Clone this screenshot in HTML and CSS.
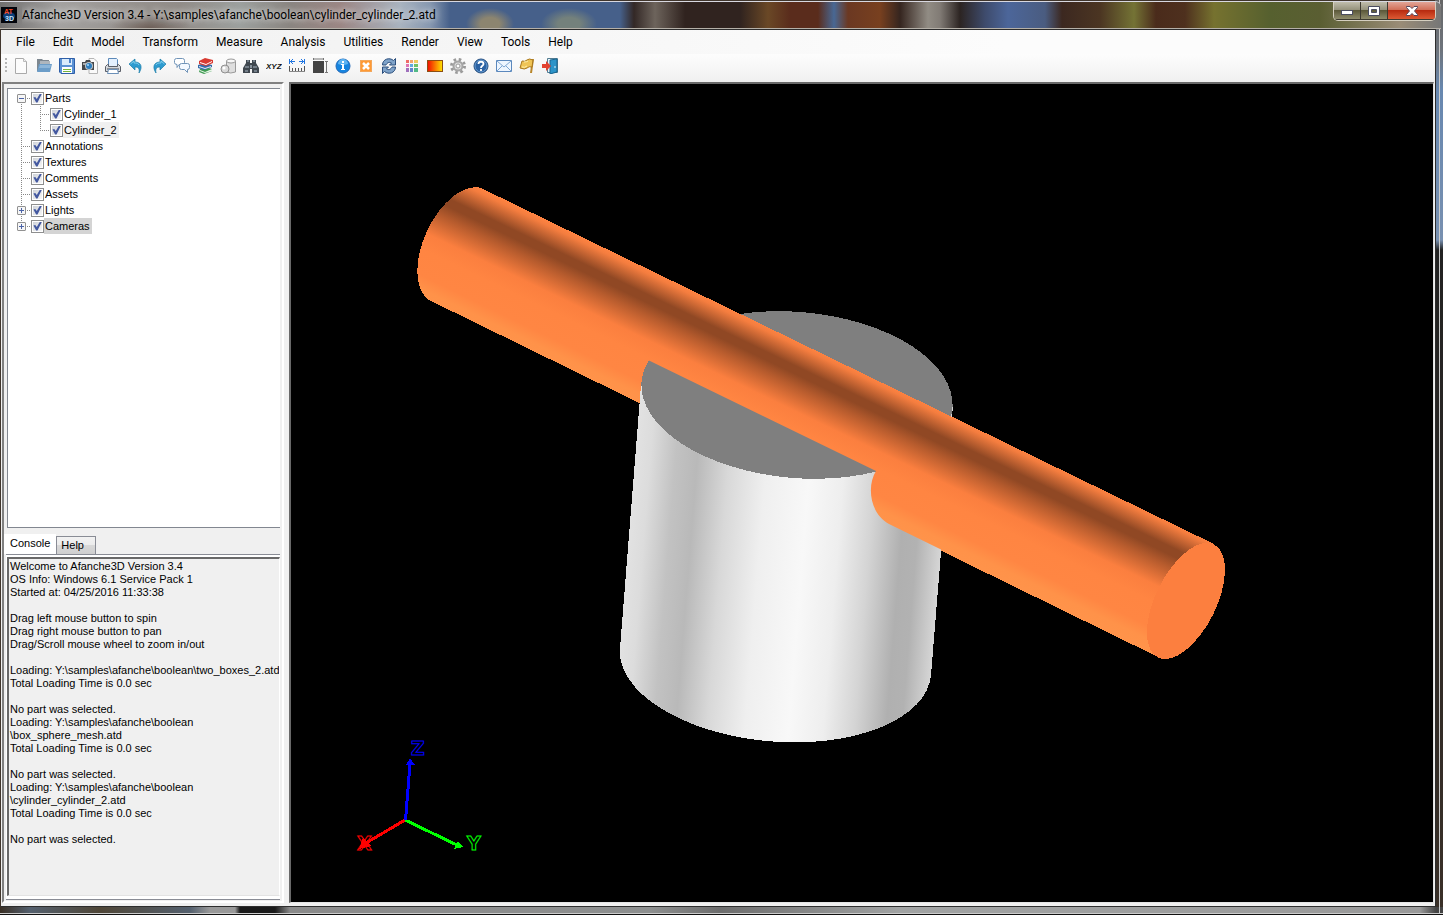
FILE: index.html
```html
<!DOCTYPE html>
<html lang="en">
<head>
<meta charset="utf-8">
<title>Afanche3D Version 3.4</title>
<link rel="stylesheet" href="styles.css">
</head>
<body>
<div class="window">
  <header class="titlebar">
    <svg class="app-icon" viewBox="0 0 16 16" aria-hidden="true">
      <rect width="16" height="16" fill="#02050c"/>
      <ellipse cx="8" cy="9" rx="6" ry="4" fill="#0d3f78"/>
      <text class="logo-top" x="3" y="7">AT</text>
      <text class="logo-bottom" x="4" y="14">3D</text>
    </svg>
    <h1 class="title">Afanche3D Version 3.4 - Y:\samples\afanche\boolean\cylinder_cylinder_2.atd</h1>
    <div class="caption-buttons">
      <button class="caption" type="button" aria-label="Minimize">
        <svg width="14" height="12" viewBox="0 0 14 12"><rect x="1.5" y="5.500" width="11" height="4" fill="#fff" stroke="#4b4d60"/></svg>
      </button>
      <button class="caption" type="button" aria-label="Maximize">
        <svg width="12" height="12" viewBox="0 0 12 12"><path d="M.5 1.500h11v9H.5zM3.500 4.500h5v3h-5z" fill="#fff" fill-rule="evenodd" stroke="#4b4d60"/></svg>
      </button>
      <button class="caption close" type="button" aria-label="Close">
        <svg width="12" height="12" viewBox="0 0 12 12"><path d="M.5 1.500h3.500L6 3.500l2-2h3.500v1L8.500 6l3 3.500v1H8L6 8.500l-2 2H.5v-1L3.500 6l-3-3.500z" fill="#fff" stroke="#54465a"/></svg>
      </button>
    </div>
  </header>

  <div class="client">
    <nav class="menubar" aria-label="Main menu">
      <button type="button">File</button><button type="button">Edit</button><button type="button">Model</button><button type="button">Transform</button><button type="button">Measure</button><button type="button">Analysis</button><button type="button">Utilities</button><button type="button">Render</button><button type="button">View</button><button type="button">Tools</button><button type="button">Help</button>
    </nav>

    <div class="toolbar" role="toolbar" aria-label="Tools">
      <span class="grip"></span>
      <button type="button" aria-label="New"><svg viewBox="0 0 16 16"><path d="M2.500.5h8l3 3v12h-11z" fill="#fcfcfc" stroke="#aaa"/><path d="M10.500.5v3h3" fill="#eee" stroke="#bbb"/></svg></button>
      <button type="button" aria-label="Open"><svg viewBox="0 0 16 16"><path d="M1 1h5l1 1h6v11H1z" fill="#7d8790"/><path d="M4 3h10v4H4z" fill="#aeb6bd"/><path d="M3 6h13l-2 8H1z" fill="#6c9dc8"/><path d="M4 7h11l-1 3H3z" fill="#8db6d9"/></svg></button>
      <button type="button" aria-label="Save"><svg viewBox="0 0 16 16"><path d="M.5.5h15v15H2l-1.500-1.500z" fill="#5b92d4" stroke="#2e5fa8"/><path d="M3 1h10v6H3z" fill="#d9ebfb"/><path d="M10 1h2v4h-2z" fill="#4a80c8"/><path d="M3 9h10v6H3z" fill="#fff"/><path d="M4 11h8v1H4zM4 13h8v1H4z" fill="#76b43c"/></svg></button>
      <button type="button" aria-label="Snapshot"><svg viewBox="0 0 16 16"><path d="M7 .5h5l3.500 3.500v11.500H7z" fill="#fafafa" stroke="#b5b5b5"/><path d="M0 4h3l1-2h4l1 2h3v8H0z" fill="#45484b"/><path d="M1 5h3v2H1z" fill="#a7a9ab"/><circle cx="7" cy="8" r="4" fill="#c1c6c9"/><circle cx="7" cy="8" r="3" fill="#2e7ec0"/><circle cx="6" cy="7" r="1" fill="#a5dcff"/></svg></button>
      <button type="button" aria-label="Print"><svg viewBox="0 0 16 16"><path d="M3.500.5h8l1 1v7h-9z" fill="#e4f0fd" stroke="#5c89b9"/><path d="M.5 8.500l2-2h1v2h9v-2h1l2 2v5H.5z" fill="#d5d8dc" stroke="#5a5f68"/><path d="M2 10h12v2H2z" fill="#8b9098"/><path d="M3.500 11.500h9l1 4h-11z" fill="#fff" stroke="#6b90b8"/></svg></button>
      <button type="button" aria-label="Undo"><svg viewBox="0 0 16 16"><path d="M1 6l6-5v3c6 0 8 5 4 11 1-5-1-6-4-6v3z" fill="#2e9bd0" stroke="#187ba8" stroke-width=".7"/><path d="M2.500 6L6 3v2c3 0 4 0 5 2" fill="none" stroke="#81cdec"/></svg></button>
      <button type="button" aria-label="Redo"><svg viewBox="0 0 16 16"><path d="M15 6L9 1v3C3 4 1 9 5 15c-1-5 1-6 4-6v3z" fill="#2e9bd0" stroke="#187ba8" stroke-width=".7"/><path d="M13.500 6L10 3v2C7 5 6 5 5 7" fill="none" stroke="#81cdec"/></svg></button>
      <button type="button" aria-label="Comments"><svg viewBox="0 0 16 16"><path d="M2.500.5h6q2 0 2 2v2q0 2-2 2H5l-2 3V6.500Q.5 6.500.5 4.500v-2q0-2 2-2z" fill="#fff" stroke="#7194b8"/><path d="M7.500 5.500h6q2 0 2 2v2q0 2-2 2v3l-3-3h-3q-2 0-2-2v-2q0-2 2-2z" fill="#f4f9ff" stroke="#7194b8"/></svg></button>
      <button type="button" aria-label="Library"><svg viewBox="0 0 16 16"><path d="M3 11l6-2 6 2v2l-8 3-5-2z" fill="#3f9c52"/><path d="M3 12l5 2 7-3v2l-7 2-5-2z" fill="#e9f5e9"/><path d="M1 7l7-2 7 2v2l-8 3-6-2z" fill="#366ba8"/><path d="M2 8l6 2 6-2v1l-6 2-6-2z" fill="#e5effa"/><path d="M2 3l6-3 8 2v3L9 8 2 6z" fill="#d83b32"/><path d="M3 4l6 2 6-3v1L9 7 3 5z" fill="#fff"/></svg></button>
      <button type="button" aria-label="Shapes"><svg viewBox="0 0 16 16"><path d="M6.500 3v11q4 2 9 0V3z" fill="#dedede" stroke="#999"/><ellipse cx="11" cy="3" rx="4.500" ry="2" fill="#f7f7f7" stroke="#999"/><path d="M3 7h3l2 7H2z" fill="#bbb"/><circle cx="5" cy="11" r="4" fill="#d9d9d9" stroke="#8f8f8f"/><circle cx="4" cy="10" r="1.500" fill="#fff"/></svg></button>
      <button type="button" aria-label="Find"><svg viewBox="0 0 16 16"><path d="M3 2h4v3h2V2h4v3l3 5v5H9v-4H7v4H0v-5l3-5z" fill="#3f474f"/><path d="M4 3h2M10 3h2M2 9h4M10 9h4M2 13h3M11 13h3" stroke="#a9b7c4"/><path d="M7 7h2v3H7z" fill="#89939d"/></svg></button>
      <button type="button" aria-label="Coordinates"><svg viewBox="0 0 16 16"><text class="xyz" x="0" y="11">XYZ</text></svg></button>
      <button type="button" aria-label="Ruler"><svg viewBox="0 0 16 16"><path d="M.5 1v5M15.500 1v5" stroke="#2276e0"/><path d="M1 3.500h5M10 3.500h5M4 1L1.500 3.500 4 6M12 1l2.500 2.500L12 6" fill="none" stroke="#2276e0"/><path d="M.5 8v5M3.500 10v3M6.500 10v3M9.500 10v3M12.500 10v3M15.500 8v5" stroke="#555"/><path d="M0 13.500h16" stroke="#888"/></svg></button>
      <button type="button" aria-label="Bounding box"><svg viewBox="0 0 16 16"><path d="M1 3h11v12H1z" fill="#444"/><path d="M1 1h11M14.500 3v12M13 3.500h3M13 14.500h3M1.500 0v2M11.500 0v2" stroke="#777"/></svg></button>
      <button type="button" aria-label="Information"><svg viewBox="0 0 16 16"><circle cx="8" cy="8" r="7" fill="#1684df" stroke="#2269b8"/><path d="M3 6a5 5 0 0 1 10 0q-5 2-10 0" fill="#5fb4f2"/><path d="M7 3h2v2H7zM6 6h3v5h1v1H6v-1h1V7H6z" fill="#fff"/></svg></button>
      <button type="button" aria-label="Clear"><svg viewBox="0 0 16 16"><rect x="2.500" y="2.500" width="11" height="11" fill="#ff9a35" stroke="#f3a75b"/><path d="M5 5l6 6M11 5l-6 6" stroke="#fff" stroke-width="2.500"/></svg></button>
      <button type="button" aria-label="Refresh"><svg viewBox="0 0 16 16"><path d="M1.500 7c0-6 7-8 11-4.500L14.500.5v6.500h-6L10.500 5C8 3.500 6 5 5 7z" fill="#7fa3c9" stroke="#2b4e7c"/><path d="M14.500 9c0 6-7 8-11 4.500L1.500 15.500V9h6l-2 2c2.500 1.500 4.500 0 5.500-2z" fill="#7fa3c9" stroke="#2b4e7c"/></svg></button>
      <button type="button" aria-label="Color grid"><svg viewBox="0 0 16 16"><path d="M2 2h3v3H2z" fill="#ef6c67"/><path d="M6 2h3v3H6z" fill="#f4a46c"/><path d="M10 2h4v3h-4z" fill="#f2ca60"/><path d="M2 6h3v3H2z" fill="#e073b4"/><path d="M6 6h3v3H6z" fill="#61a9e2"/><path d="M10 6h4v3h-4z" fill="#72c366"/><path d="M2 10h3v4H2z" fill="#a071bd"/><path d="M6 10h3v4H6z" fill="#6384cb"/><path d="M10 10h4v4h-4z" fill="#51b987"/></svg></button>
      <button type="button" aria-label="Gradient"><svg viewBox="0 0 16 16"><defs><linearGradient id="heat"><stop stop-color="#f20b00"/><stop offset="1" stop-color="#ffe400"/></linearGradient></defs><rect x=".5" y="2.500" width="15" height="11" fill="url(#heat)" stroke="#8c4e12"/></svg></button>
      <button type="button" aria-label="Settings"><svg viewBox="0 0 16 16"><circle cx="8" cy="8" r="6.500" fill="none" stroke="#9a9a9a" stroke-width="3" stroke-dasharray="2.500 2.600"/><circle cx="8" cy="8" r="4.500" fill="#ddd" stroke="#a5a5a5" stroke-width="2"/><circle cx="8" cy="8" r="2" fill="#fff" stroke="#999"/></svg></button>
      <button type="button" aria-label="Help"><svg viewBox="0 0 16 16"><circle cx="8" cy="8" r="7" fill="#2b62a3" stroke="#234b7b"/><circle cx="8" cy="8" r="6" fill="none" stroke="#679bd0"/><path d="M5.500 6c0-3 5-3 5 0 0 2-2.500 1.500-2.500 4M8 11v2" fill="none" stroke="#fff" stroke-width="1.800"/></svg></button>
      <button type="button" aria-label="Mail"><svg viewBox="0 0 16 16"><path d="M.5 2.500h15v11H.5z" fill="#eef6ff" stroke="#5b88bd"/><path d="M1 3l7 6 7-6M1 13l5-5M15 13l-5-5" fill="none" stroke="#7da6d2"/></svg></button>
      <button type="button" aria-label="Flag"><svg viewBox="0 0 16 16"><path d="M13 1h2l-2 14h-2z" fill="#b8862a"/><path d="M3 3q3 1 5-1t6 0l-1 7q-3-1-5 1t-7 0z" fill="#efc455" stroke="#a9781d"/><path d="M5 4q3 0 4-1M3 9q3 1 5-1" fill="none" stroke="#fff0ad"/></svg></button>
      <button type="button" aria-label="Exit"><svg viewBox="0 0 16 16"><path d="M5.500.5h10v14h-10z" fill="#e9f3f8" stroke="#537c91"/><path d="M8 2l7-1v13l-7 2z" fill="#2c94c9" stroke="#19658f"/><path d="M13 8v2" stroke="#d9f3ff"/><path d="M0 6h4V3l5 5-5 5v-3H0z" fill="#e24331"/></svg></button>
    </div>

    <main class="workspace">
      <aside class="side">
        <ul class="tree" aria-label="Scene">
          <li class="row"><span class="twig first"><button class="expander" type="button" aria-label="Collapse Parts"></button></span><input type="checkbox" id="t0" checked><label for="t0">Parts</label></li>
          <li class="row"><span class="twig pass"></span><span class="twig"></span><input type="checkbox" id="t1" checked><label for="t1">Cylinder_1</label></li>
          <li class="row"><span class="twig pass"></span><span class="twig last"></span><input type="checkbox" id="t2" checked><label class="hover" for="t2">Cylinder_2</label></li>
          <li class="row"><span class="twig"></span><input type="checkbox" id="t3" checked><label for="t3">Annotations</label></li>
          <li class="row"><span class="twig"></span><input type="checkbox" id="t4" checked><label for="t4">Textures</label></li>
          <li class="row"><span class="twig"></span><input type="checkbox" id="t5" checked><label for="t5">Comments</label></li>
          <li class="row"><span class="twig"></span><input type="checkbox" id="t6" checked><label for="t6">Assets</label></li>
          <li class="row"><span class="twig"><button class="expander plus" type="button" aria-label="Expand Lights"></button></span><input type="checkbox" id="t7" checked><label for="t7">Lights</label></li>
          <li class="row"><span class="twig last"><button class="expander plus" type="button" aria-label="Expand Cameras"></button></span><input type="checkbox" id="t8" checked><label class="selected" for="t8">Cameras</label></li>
        </ul>
        <div class="tabs" role="tablist">
          <button class="tab active" type="button" role="tab" aria-selected="true">Console</button>
          <button class="tab" type="button" role="tab" aria-selected="false">Help</button>
        </div>
        <div class="tab-page">
<pre class="console" role="log">Welcome to Afanche3D Version 3.4
OS Info: Windows 6.1 Service Pack 1
Started at: 04/25/2016 11:33:38

Drag left mouse button to spin
Drag right mouse button to pan
Drag/Scroll mouse wheel to zoom in/out

Loading: Y:\samples\afanche\boolean\two_boxes_2.atd
Total Loading Time is 0.0 sec

No part was selected.
Loading: Y:\samples\afanche\boolean
\box_sphere_mesh.atd
Total Loading Time is 0.0 sec

No part was selected.
Loading: Y:\samples\afanche\boolean
\cylinder_cylinder_2.atd
Total Loading Time is 0.0 sec

No part was selected.</pre>
        </div>
      </aside>

      <section class="viewport" aria-label="3D view">
        <svg class="scene" viewBox="291 84 1142 818">
          <defs>
            <linearGradient id="orange" gradientUnits="userSpaceOnUse" x1="481" y1="188" x2="427" y2="300">
              <stop offset="0" stop-color="#ff8442"/>
              <stop offset=".04" stop-color="#f47d3f"/>
              <stop offset=".19" stop-color="#904824"/>
              <stop offset=".25" stop-color="#904824"/>
              <stop offset=".34" stop-color="#b65b2d"/>
              <stop offset=".52" stop-color="#fb7f3f"/>
              <stop offset=".65" stop-color="#ff8542"/>
              <stop offset=".84" stop-color="#ff8643"/>
              <stop offset=".94" stop-color="#ff9249"/>
              <stop offset="1" stop-color="#ff934a"/>
            </linearGradient>
            <linearGradient id="silver" gradientUnits="userSpaceOnUse" x1="630" y1="515" x2="942" y2="540">
              <stop offset="0" stop-color="#e2e2e2"/>
              <stop offset=".05" stop-color="#dcdcdc"/>
              <stop offset=".13" stop-color="#c2c2c2"/>
              <stop offset=".2" stop-color="#b9b9b9"/>
              <stop offset=".3" stop-color="#d8d8d8"/>
              <stop offset=".42" stop-color="#efefef"/>
              <stop offset=".56" stop-color="#f8f8f8"/>
              <stop offset=".67" stop-color="#eee"/>
              <stop offset=".77" stop-color="#d4d4d4"/>
              <stop offset=".87" stop-color="#b0b0b0"/>
              <stop offset=".92" stop-color="#b2b2b2"/>
              <stop offset="1" stop-color="#d6d6d6"/>
            </linearGradient>
            <clipPath id="front"><path d="M560 317L650 361L876 471C867 485 869 513 889 524L1250 701V100H560z"/></clipPath>
            <path id="rod" d="M481 188L1214 544L1158 657L429 300A34 62 25 0 1 481 188z"/>
          </defs>
          <g shape-rendering="crispEdges">
            <use href="#rod" fill="url(#orange)"/>
            <path d="M641 385L620 648A156 80 5 0 0 931 675L953 405z" fill="url(#silver)"/>
            <ellipse cx="797" cy="395" rx="156" ry="83" transform="rotate(5 797 395)" fill="#7f7f7f"/>
            <g clip-path="url(#front)"><use href="#rod" fill="url(#orange)"/></g>
            <ellipse cx="1186" cy="601" rx="30.300" ry="63" transform="rotate(26.400 1186 601)" fill="#fc7f3f"/>
            <path d="M405 820L366 843" stroke="#f00" stroke-width="3"/>
            <path d="M359 849l4-11 8 8z" fill="#f00"/>
            <path d="M405 820L457 845" stroke="#0f0" stroke-width="3"/>
            <path d="M463 847l-9 2 4-8z" fill="#0f0"/>
            <path d="M405.500 820L410 764" stroke="#00f" stroke-width="3"/>
            <path d="M410 758l5 7h-9z" fill="#00f"/>
          </g>
          <text class="axis axis-x" x="357" y="850">X</text>
          <text class="axis axis-y" x="467" y="850">Y</text>
          <text class="axis axis-z" x="411" y="755">Z</text>
        </svg>
      </section>
    </main>
  </div>
</div>
</body>
</html>
```

FILE: styles.css
```css
* { box-sizing: border-box; }

body {
  margin: 0;
  background: #000;
  font-family: "Liberation Sans", Arial, sans-serif;
  font-size: 11px;
  color: #000;
}

button {
  margin: 0;
  padding: 0;
  border: 0;
  background: none;
  color: inherit;
  font: inherit;
}

svg { display: block; }

.window {
  display: flex;
  flex-direction: column;
  height: 100vh;
  padding: 1px 2px 1px 0;
  background:
    linear-gradient(#111, #111) bottom / 100% 1px no-repeat,
    linear-gradient(#ccc, #ccc) 0 calc(100% - 1px) / 100% 1px no-repeat,
    linear-gradient(#ccc, #ccc) calc(100% - 3px) 0 / 1px 100% no-repeat,
    linear-gradient(90deg, #3a2f24 0, #54606e 30px, #4f4637 100px, #54606e 190px, #999 210px, #999 235px, #1a1a1a 240px, #1a1a1a 275px, #8a8a8a 290px, #8d8f8f 650px, #6d6d6d 720px, #a1a3a3 900px, #999 1420px, #444 1436px) bottom / 100% 8px no-repeat,
    linear-gradient(#666 0, #6e747c 50px, #6888b0 90px, #7890b0 240px, #222 250px, #3a3028 100%) right / 8px 100% no-repeat,
    #40352c;
}

.titlebar {
  display: flex;
  align-items: center;
  height: 28px;
  flex: none;
  padding-right: 5px;
  border-top: 1px solid #d8d8e0;
  border-bottom: 1px solid #b5b0a8;
  border-radius: 0 6px 0 0;
  background:
    radial-gradient(ellipse 24px 16px at 490px 22px, #8c8570 40%, transparent),
    radial-gradient(ellipse 28px 16px at 569px 22px, #74817c 40%, transparent),
    radial-gradient(ellipse 40px 14px at 150px 26px, #6e6059, transparent),
    linear-gradient(90deg, #71706f 0, #a3a1a0 60px, #96928e 130px, #918c88 180px, #9ca09e 240px, #8a8581 290px, #9b8684 340px, #a9b3bf 400px, #8798b0 430px, #46608a 450px, #46608a 620px, #332826 634px, #6d645c 655px, #30231f 685px, #30231f 740px, #6a4826 768px, #5a2c1c 790px, #5a2c1c 818px, #486894 834px, #6b3822 848px, #78401f 880px, #35251f 900px, #918c84 928px, #817b75 940px, #2c2422 960px, #3e4b6c 985px, #4c669a 1008px, #4a5c80 1045px, #3c2820 1062px, #4b3522 1100px, #747335 1134px, #4a2b1b 1156px, #4e301e 1185px, #76722f 1214px, #56602f 1270px, #5a5e32 1320px, #9a8c77 1400px, #777 1440px);
}

.app-icon { width: 16px; height: 16px; flex: none; margin-left: 1px; }
.logo-top, .logo-bottom { font: bold 7px "Liberation Sans", sans-serif; fill: #f04b26; }
.logo-bottom { fill: #c8e4ff; }

.title {
  flex: 1;
  margin: 0 0 0 5px;
  font: 12px/24px Roboto, "Open Sans", sans-serif;
  white-space: nowrap;
  overflow: hidden;
  text-shadow: 0 0 6px rgba(255, 255, 255, .7), 0 0 10px rgba(255, 255, 255, .6);
}

.caption-buttons {
  display: flex;
  align-self: flex-start;
  border: 1px solid #d5cfc0;
  border-top: 0;
  border-radius: 0 0 5px 5px;
  overflow: hidden;
}
.caption {
  display: grid;
  place-items: center;
  width: 27px;
  height: 18px;
  border: 1px solid #3d3a30;
  border-width: 0 1px 1px 0;
  background: linear-gradient(#c0bdac, #928f78 50%, #5c593a 50%, #8f8c6c);
}
.caption.close {
  width: 47px;
  border-right: 0;
  background: linear-gradient(#e2a597, #cf6a52 50%, #b82b10 50%, #dd5a34);
}

.client {
  flex: 1;
  min-height: 0;
  display: flex;
  flex-direction: column;
  margin: 0 5px 7px 1px;
  border: 1px solid #2d2d2d;
  border-width: 1px 1px 1px 0;
  background: #f0f0f0;
}

.menubar {
  display: flex;
  flex: none;
  height: 24px;
  padding-left: 6px;
  background: linear-gradient(90deg, #f0f0f0, #fcfcfc 70%);
  font: 12px/23px Roboto, "Open Sans", sans-serif;
}
.menubar button { padding: 0 9px; }

.toolbar {
  display: flex;
  align-items: center;
  flex: none;
  height: 28px;
  padding: 0 0 5px 4px;
  background: linear-gradient(#fdfdfd, #f0f0f0);
}
.toolbar button { display: grid; place-items: center; width: 23px; height: 22px; }
.toolbar svg { width: 16px; height: 16px; }
.grip {
  width: 2px;
  height: 15px;
  margin-right: 2px;
  background: repeating-linear-gradient(#b5b5b5 0 2px, transparent 2px 4px);
}
.xyz { font: italic bold 8px "Liberation Sans", sans-serif; fill: #111; }

.workspace {
  display: flex;
  flex: 1;
  min-height: 0;
  gap: 5px;
  padding: 0 1px 3px;
}

.side {
  display: flex;
  flex-direction: column;
  flex: none;
  width: 282px;
  padding: 4px 1px 1px 3px;
  border: 2px solid #808080;
  border-right-color: #fff;
  border-bottom-color: #fff;
}

.tree {
  flex: 446 1 0;
  min-height: 0;
  margin: 0 1px 0 0;
  padding: 1px 0 0 9px;
  border: 1px solid #828790;
  border-right: 0;
  background: #fff;
  list-style: none;
}
.row { display: flex; align-items: center; height: 16px; }
.row label { height: 16px; padding: 0 2px 0 1px; line-height: 16px; }
.row .hover { background: #f0f0f0; }
.row .selected { background: #d4d4d4; }
.row input {
  appearance: none;
  display: grid;
  place-items: center;
  width: 13px;
  height: 13px;
  margin: 0;
  border: 1px solid #8e8f8f;
  background: linear-gradient(135deg, #cfd3d9, #f6f6f6) content-box;
  padding: 1px;
}
.row input:checked::before {
  content: "";
  width: 9px;
  height: 9px;
  background: #4358a0;
  clip-path: polygon(5% 45%, 25% 38%, 42% 62%, 78% 0, 100% 0, 50% 100%, 35% 100%);
}
.twig {
  width: 14px;
  height: 16px;
  padding: 4px 0 0 0;
  background:
    repeating-linear-gradient(#888 0 1px, transparent 1px 2px) 4px 0 / 1px 16px no-repeat,
    repeating-linear-gradient(90deg, #888 0 1px, transparent 1px 2px) 4px 8px / 10px 1px no-repeat;
}
.twig.first {
  background:
    repeating-linear-gradient(#888 0 1px, transparent 1px 2px) 4px 8px / 1px 8px no-repeat,
    repeating-linear-gradient(90deg, #888 0 1px, transparent 1px 2px) 4px 8px / 10px 1px no-repeat;
}
.twig.last {
  background:
    repeating-linear-gradient(#888 0 1px, transparent 1px 2px) 4px 0 / 1px 8px no-repeat,
    repeating-linear-gradient(90deg, #888 0 1px, transparent 1px 2px) 4px 8px / 10px 1px no-repeat;
}
.twig.pass {
  width: 19px;
  background: repeating-linear-gradient(#888 0 1px, transparent 1px 2px) 4px 0 / 1px 16px no-repeat;
}
.expander {
  display: block;
  width: 9px;
  height: 9px;
  border: 1px solid #919191;
  border-radius: 1px;
  background: linear-gradient(#4b63a7, #4b63a7) center / 5px 1px no-repeat, #f6f6f6;
}
.expander.plus {
  background:
    linear-gradient(#4b63a7, #4b63a7) center / 5px 1px no-repeat,
    linear-gradient(#4b63a7, #4b63a7) center / 1px 5px no-repeat,
    #f6f6f6;
}

.tabs { display: flex; align-items: flex-end; flex: none; height: 26px; margin-left: -3px; }
.tab {
  height: 18px;
  padding: 0 11px 0 4px;
  border: 1px solid #898c95;
  border-bottom: 0;
  background: linear-gradient(#f2f2f2, #ebebeb 50%, #d8d8d8 50%, #cfcfcf);
}
.tab.active {
  height: 20px;
  padding: 0 6px 2px;
  border: 0;
  background: #fff;
}

.tab-page {
  flex: 346 1 0;
  min-height: 0;
  margin: 0 1px 0 -1px;
  padding: 2px 0 3px 1px;
  border-top: 1px solid #898c95;
  border-bottom: 1px solid #898c95;
  background: #fff;
}
.console {
  height: 100%;
  margin: 0;
  padding: 1px 0 0 1px;
  border: 1px solid #696969;
  border-width: 2px 1px 1px 2px;
  border-right-color: #fff;
  border-bottom-color: #e3e3e3;
  background: #f0f0f0;
  font: 11px/13px "Liberation Sans", Arial, sans-serif;
  overflow: hidden;
}

.viewport {
  flex: 1;
  min-width: 0;
  border: 1px solid #696969;
  border-width: 2px 1px 1px 2px;
  border-right-color: #e3e3e3;
  border-bottom-color: #e3e3e3;
  background: #000;
}
.scene { width: 100%; height: 100%; }
.axis { font: bold 19px "DejaVu Sans", sans-serif; fill: #000; stroke-width: 1; }
.axis-x { fill: none; stroke: #f00; }
.axis-y { stroke: #0f0; }
.axis-z { stroke: #00f; }
```
